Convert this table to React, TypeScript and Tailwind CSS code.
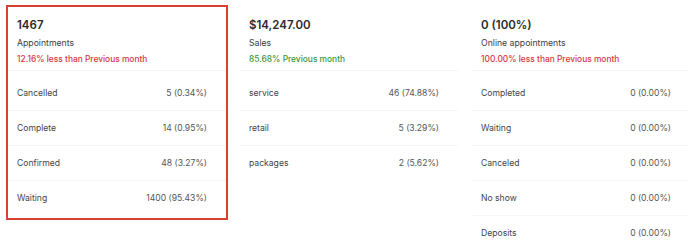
import React from "react";

type Row = { label: string; value: string };

const cards: {
  title: string;
  subtitle: string;
  note: string;
  tone: "red" | "green";
  active: boolean;
  rows: Row[];
}[] = [
  {
    title: "1467",
    subtitle: "Appointments",
    note: "12.16% less than Previous month",
    tone: "red",
    active: true,
    rows: [
      { label: "Cancelled", value: "5 (0.34%)" },
      { label: "Complete", value: "14 (0.95%)" },
      { label: "Confirmed", value: "48 (3.27%)" },
      { label: "Waiting", value: "1400 (95.43%)" },
    ],
  },
  {
    title: "$14,247.00",
    subtitle: "Sales",
    note: "85.68% Previous month",
    tone: "green",
    active: false,
    rows: [
      { label: "service", value: "46 (74.88%)" },
      { label: "retail", value: "5 (3.29%)" },
      { label: "packages", value: "2 (5.62%)" },
    ],
  },
  {
    title: "0 (100%)",
    subtitle: "Online appointments",
    note: "100.00% less than Previous month",
    tone: "red",
    active: false,
    rows: [
      { label: "Completed", value: "0 (0.00%)" },
      { label: "Waiting", value: "0 (0.00%)" },
      { label: "Canceled", value: "0 (0.00%)" },
      { label: "No show", value: "0 (0.00%)" },
      { label: "Deposits", value: "0 (0.00%)" },
    ],
  },
];

const App = () => {
  return (
    <div
      className="w-[688px] h-[251px] overflow-hidden bg-white"
      style={{ fontFamily: "Inter, 'Noto Sans', sans-serif" }}
    >
      <div className="flex gap-[10px] pl-[6px] pt-[5px]">
        {cards.map((card) => (
          <div
            key={card.title}
            className={
              card.active
                ? "w-[222px] shrink-0 h-[215px] border-2 border-[#d8402f] bg-white"
                : "w-[222px] shrink-0 border-2 border-transparent bg-white"
            }
          >
            <div className="pl-[9px] pr-[19px] pt-[11px] h-[64px] border-b border-[#f5f5f5]">
              <div className="text-[11.5px] leading-[14px] font-semibold text-[#2a2a2a]">
                {card.title}
              </div>
              <div className="mt-[5px] text-[8.7px] leading-[12px] text-[#3d3d3d]">
                {card.subtitle}
              </div>
              <div
                className={
                  card.tone === "red"
                    ? "mt-[4px] text-[8.4px] leading-[12px] font-medium text-[#d8343d]"
                    : "mt-[4px] text-[8.4px] leading-[12px] font-medium text-[#3d963d]"
                }
              >
                {card.note}
              </div>
            </div>
            <div className="mt-[5px]">
              {card.rows.map((row, index) => (
                <div
                  key={row.label}
                  className={
                    index < card.rows.length - 1
                      ? "h-[35px] flex items-center justify-between pl-[9px] pr-[19px] border-b border-[#f6f6f6] text-[8.6px] text-[#444]"
                      : "h-[35px] flex items-center justify-between pl-[9px] pr-[19px] text-[8.6px] text-[#444]"
                  }
                >
                  <span>{row.label}</span>
                  <span className="text-[#555]">{row.value}</span>
                </div>
              ))}
            </div>
          </div>
        ))}
      </div>
    </div>
  );
};

export default App;
